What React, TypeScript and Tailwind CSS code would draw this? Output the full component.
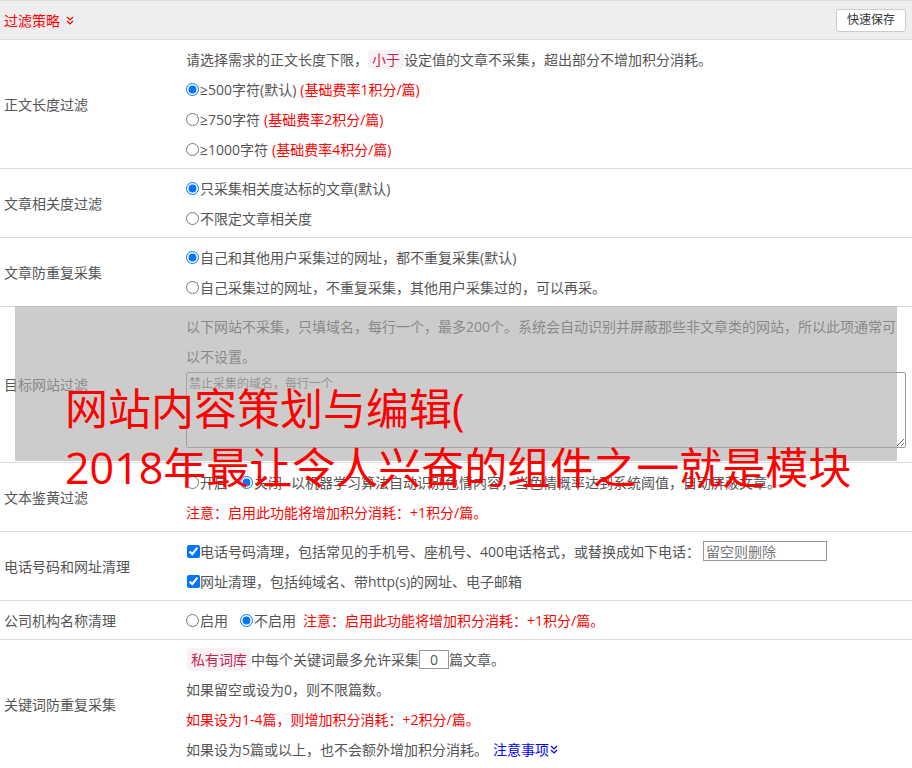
import React from 'react';

const Chevrons = ({ color }: { color: string }) => (
  <svg width="8" height="9" viewBox="0 0 8 9" fill="none" stroke={color} strokeWidth="1.2">
    <polyline points="1,1 4,4 7,1" />
    <polyline points="1,5 4,8 7,5" />
  </svg>
);

function Row({ label, children }: { label: string; children: React.ReactNode }) {
  return (
    <div className="flex border-b border-[#ddd]">
      <div className="w-[186px] shrink-0 flex items-center pl-1">{label}</div>
      <div className="flex-1 min-w-0 py-1 pr-[6px]">{children}</div>
    </div>
  );
}

const Line = ({ children }: { children: React.ReactNode }) => (
  <div className="h-[30px] flex items-center whitespace-nowrap">{children}</div>
);

const Radio = ({ name, checked }: { name: string; checked?: boolean }) => (
  <input type="radio" name={name} defaultChecked={checked} className="m-0 size-[13px] shrink-0" />
);

const Check = () => (
  <input type="checkbox" defaultChecked className="m-0 ml-[1px] size-[13px] shrink-0" />
);

const Badge = ({ children }: { children: React.ReactNode }) => (
  <span className="bg-[#f9f2f4] text-[#c7254e] px-1 py-[2px] rounded leading-[15px]">{children}</span>
);

function App() {
  return (
    <div className="relative w-[912px] min-h-[768px] overflow-hidden bg-white text-[14px] text-[#555] font-['Open_Sans','Noto_Sans_CJK_SC',sans-serif]">
      {/* Header */}
      <div className="h-10 flex items-center justify-between border-t border-b border-[#ddd] bg-[#eee] pl-1 pr-[6px]">
        <div className="flex items-center gap-[6px] text-[#f00]">
          <span>过滤策略</span>
          <Chevrons color="#f00" />
        </div>
        <button className="w-[70px] h-[23px] bg-white border border-[#ccc] rounded-[3px] text-[12px] text-[#333]">
          快速保存
        </button>
      </div>

      <Row label="正文长度过滤">
        <Line>
          请选择需求的正文长度下限，<Badge>小于</Badge>设定值的文章不采集，超出部分不增加积分消耗。
        </Line>
        <Line>
          <Radio name="len" checked />
          <span className="ml-[1px]">≥500字符(默认)</span>
          <span className="ml-1 text-[#f00]">(基础费率1积分/篇)</span>
        </Line>
        <Line>
          <Radio name="len" />
          <span className="ml-[1px]">≥750字符</span>
          <span className="ml-1 text-[#f00]">(基础费率2积分/篇)</span>
        </Line>
        <Line>
          <Radio name="len" />
          <span className="ml-[1px]">≥1000字符</span>
          <span className="ml-1 text-[#f00]">(基础费率4积分/篇)</span>
        </Line>
      </Row>

      <Row label="文章相关度过滤">
        <Line>
          <Radio name="rel" checked />
          <span className="ml-[1px]">只采集相关度达标的文章(默认)</span>
        </Line>
        <Line>
          <Radio name="rel" />
          <span className="ml-[1px]">不限定文章相关度</span>
        </Line>
      </Row>

      <Row label="文章防重复采集">
        <Line>
          <Radio name="dup" checked />
          <span className="ml-[1px]">自己和其他用户采集过的网址，都不重复采集(默认)</span>
        </Line>
        <Line>
          <Radio name="dup" />
          <span className="ml-[1px]">自己采集过的网址，不重复采集，其他用户采集过的，可以再采。</span>
        </Line>
      </Row>

      <div className="relative">
        <Row label="目标网站过滤">
          <p className="leading-[30px] mt-[1px]">
            以下网站不采集，只填域名，每行一个，最多200个。系统会自动识别并屏蔽那些非文章类的网站，所以此项通常可以不设置。
          </p>
          <textarea
            placeholder="禁止采集的域名，每行一个"
            className="block w-full h-[76px] mb-[10px] border border-[#999] rounded-[2px] px-[2px] py-[2px] text-[12px] leading-[18px] placeholder:text-[#707070]"
          />
        </Row>
        <div className="absolute left-[15px] -top-px w-[882px] h-[155px] bg-[rgba(170,170,170,0.6)]" />
      </div>

      <Row label="文本鉴黄过滤">
        <Line>
          <Radio name="porn" />
          <span className="ml-[1px]">开启</span>
          <span className="ml-[12px] flex items-center">
            <Radio name="porn" checked />
          </span>
          <span className="ml-[1px]">关闭</span>
          <span className="ml-[9px]">以机器学习算法自动识别色情内容，当色情概率达到系统阈值，自动屏蔽文章。</span>
        </Line>
        <Line>
          <span className="text-[#f00]">注意：启用此功能将增加积分消耗：+1积分/篇。</span>
        </Line>
      </Row>

      <Row label="电话号码和网址清理">
        <Line>
          <Check />
          <span>电话号码清理，包括常见的手机号、座机号、400电话格式，或替换成如下电话：</span>
          <input
            placeholder="留空则删除"
            className="ml-[3px] w-[124px] h-[20px] border border-[#999] px-[2px] text-[14px] placeholder:text-[#777]"
          />
        </Line>
        <Line>
          <Check />
          <span>网址清理，包括纯域名、带http(s)的网址、电子邮箱</span>
        </Line>
      </Row>

      <Row label="公司机构名称清理">
        <Line>
          <Radio name="org" />
          <span className="ml-[1px]">启用</span>
          <span className="ml-[12px] flex items-center">
            <Radio name="org" checked />
          </span>
          <span className="ml-[1px]">不启用</span>
          <span className="ml-[7px] text-[#f00]">注意：启用此功能将增加积分消耗：+1积分/篇。</span>
        </Line>
      </Row>

      <Row label="关键词防重复采集">
        <Line>
          <span className="ml-px">
            <Badge>私有词库</Badge>
          </span>
          <span>中每个关键词最多允许采集</span>
          <input
            defaultValue="0"
            className="w-[30px] h-[19px] border border-[#999] text-center text-[14px] text-[#555]"
          />
          <span>篇文章。</span>
        </Line>
        <Line>如果留空或设为0，则不限篇数。</Line>
        <Line>
          <span className="text-[#f00]">如果设为1-4篇，则增加积分消耗：+2积分/篇。</span>
        </Line>
        <Line>
          <span>如果设为5篇或以上，也不会额外增加积分消耗。</span>
          <span className="ml-[5px] text-[#00f]">注意事项</span>
          <span className="ml-[1px]">
            <Chevrons color="#00f" />
          </span>
        </Line>
      </Row>

      {/* overlaid title */}
      <div className="absolute left-[65px] top-[379px] text-[43px] leading-[59px] text-[#f00] whitespace-nowrap pointer-events-none">
        网站内容策划与编辑(
        <br />
        2018年最让令人兴奋的组件之一就是模块
      </div>
    </div>
  );
}

export default App;
